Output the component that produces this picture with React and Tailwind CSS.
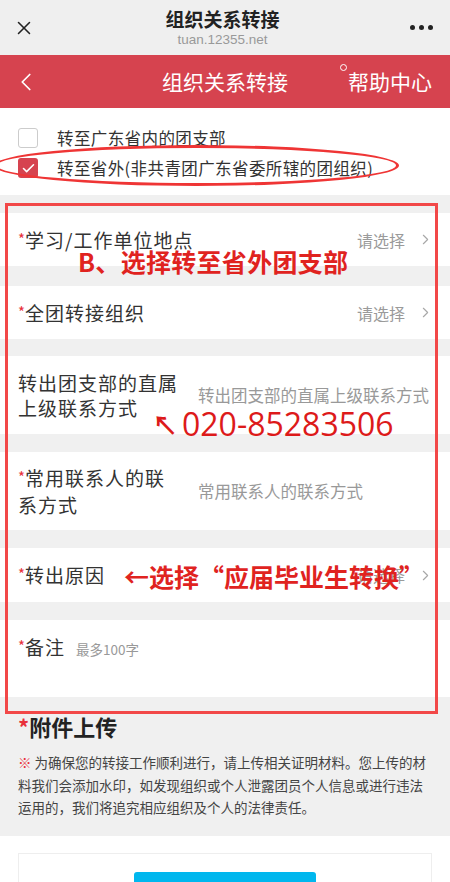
import React from "react";
import { X, ChevronLeft, ChevronRight, Check } from "lucide-react";

const F = "font-['Noto_Sans_CJK_SC','Noto_Sans',sans-serif]";

function Star() {
  return <span className="text-[#e8303a] text-[15px] relative top-[-3px] tracking-normal">*</span>;
}

function SelectRow({ label, mt }) {
  return (
    <div className={`bg-white h-[53px] flex items-center pl-[18px] pr-[16px] ${mt}`}>
      <div className="text-[19px] tracking-[1px] text-[#333] flex-1 leading-none">
        <Star />
        {label}
      </div>
      <div className="text-[16px] text-[#9a9a9a] mr-[12px]">请选择</div>
      <ChevronRight size={17} strokeWidth={1.6} className="text-[#a8a8a8]" />
    </div>
  );
}

export default function App() {
  return (
    <div className={`relative w-[450px] h-[882px] overflow-hidden bg-[#f0f0f0] ${F}`}>
      {/* browser header */}
      <div className="h-[55px] bg-[#efefef] flex items-center px-[13px]">
        <X size={22} strokeWidth={1.7} className="text-[#222]" />
        <div className="flex-1 flex flex-col items-center pt-[2px]">
          <div className="text-[19px] font-bold text-[#222] leading-[22px]">组织关系转接</div>
          <div className="text-[13.5px] text-[#999] leading-[19px] font-['Liberation_Sans',sans-serif]">tuan.12355.net</div>
        </div>
        <div className="flex gap-[4px] mr-[4px]">
          <span className="w-[5px] h-[5px] rounded-full bg-[#222]" />
          <span className="w-[5px] h-[5px] rounded-full bg-[#222]" />
          <span className="w-[5px] h-[5px] rounded-full bg-[#222]" />
        </div>
      </div>

      {/* red bar */}
      <div className="h-[53px] bg-[#d6434f] grid grid-cols-[1fr_auto_1fr] items-center text-white">
        <ChevronLeft size={30} strokeWidth={1.4} className="ml-[11px]" />
        <div className="text-[21px]">组织关系转接</div>
        <div className="flex justify-end">
          <div className="text-[21px] mr-[18px] relative">
            <span className="absolute left-[-8px] top-[-2px] w-[7px] h-[7px] rounded-full border border-white" />
            帮助中心
          </div>
        </div>
      </div>

      {/* checkbox section */}
      <div className="bg-white h-[87px] pt-[20px] pl-[18px] flex flex-col gap-[10px]">
        <div className="flex items-center gap-[19px] h-[20px]">
          <span className="w-[20px] h-[20px] rounded-[3px] border border-[#ccc] bg-white" />
          <span className="text-[16.5px] tracking-[0.4px] text-[#333]">转至广东省内的团支部</span>
        </div>
        <div className="flex items-center gap-[19px] h-[20px]">
          <span className="w-[20px] h-[20px] rounded-[3px] bg-[#d6434f] flex items-center justify-center">
            <Check size={15} strokeWidth={2.5} className="text-white" />
          </span>
          <span className="text-[16.5px] tracking-[0.4px] text-[#333]">转至省外(非共青团广东省委所辖的团组织)</span>
        </div>
      </div>

      <SelectRow label="学习/工作单位地点" mt="mt-[18px]" />
      <SelectRow label="全团转接组织" mt="mt-[20px]" />

      {/* row 3 */}
      <div className="bg-white h-[78px] mt-[17px] flex items-center pl-[18px]">
        <div className="w-[180px] text-[19px] tracking-[1px] text-[#333] leading-[25px]">
          转出团支部的直属<br />上级联系方式
        </div>
        <div className="text-[16.5px] text-[#999] whitespace-nowrap">转出团支部的直属上级联系方式</div>
      </div>

      {/* row 4 */}
      <div className="bg-white h-[78px] mt-[18px] flex items-center pl-[18px]">
        <div className="w-[180px] text-[19px] tracking-[1px] text-[#333] leading-[25px]">
          <Star />常用联系人的联<br />系方式
        </div>
        <div className="text-[16.5px] text-[#999]">常用联系人的联系方式</div>
      </div>

      {/* row 5 */}
      <div className="bg-white h-[54px] mt-[18px] flex items-center pl-[18px] pr-[16px]">
        <div className="text-[19px] tracking-[1px] text-[#333] flex-1">
          <Star />转出原因
        </div>
        <div className="text-[16px] text-[#9a9a9a] mr-[12px]">请选择</div>
        <ChevronRight size={17} strokeWidth={1.6} className="text-[#a8a8a8]" />
      </div>

      {/* row 6 */}
      <div className="bg-white h-[77px] mt-[18px] pl-[18px] pt-[13px] flex items-baseline gap-[11px]">
        <div className="text-[19px] tracking-[1px] text-[#333]">
          <Star />备注
        </div>
        <div className="text-[13.5px] text-[#999]">最多100字</div>
      </div>

      {/* attachments */}
      <div className="px-[18px] pt-[14px]">
        <div className="text-[22px] font-bold text-[#222] leading-[30px]">
          <span className="text-[#e8303a]">*</span>附件上传
        </div>
        <div className="mt-[10px] text-[13.5px] text-[#444] leading-[22.5px]">
          <span className="text-[#e8303a]">※</span> 为确保您的转接工作顺利进行，请上传相关证明材料。您上传的材料我们会添加水印，如发现组织或个人泄露团员个人信息或进行违法运用的，我们将追究相应组织及个人的法律责任。
        </div>
      </div>

      <div className="absolute left-0 right-0 top-[836px] bottom-0 bg-white px-[18px] pt-[17px]">
        <div className="h-[60px] border border-[#eee] flex justify-center pt-[18px]">
          <div className="w-[182px] h-[40px] rounded-[3px] bg-[#00b7ee]" />
        </div>
      </div>

      {/* annotations */}
      <div className="absolute left-[-6px] top-[145px] w-[405px] h-[41px] rounded-[50%] border-[3px] border-[#ef3535]" />
      <div className="absolute left-[5px] top-[203px] w-[433px] h-[511px] border-[3px] border-[#f24848]" />
      <div className="absolute left-[78px] top-[244px] text-[25px] font-bold text-[#e0231f] leading-[34px] tracking-[0.3px]">
        B、选择转至省外团支部
      </div>
      <div className="absolute left-[152px] top-[408px] flex items-center text-[#dd1a1a] leading-none">
        <span className="text-[26px] font-bold mr-[4px]">↖</span>
        <span className="text-[32px] font-['Open_Sans',sans-serif]">020-85283506</span>
      </div>
      <div className="absolute left-[124px] top-[559px] text-[25px] font-bold text-[#e0231f] leading-[34px]">
        ←选择“应届毕业生转换”
      </div>
    </div>
  );
}
